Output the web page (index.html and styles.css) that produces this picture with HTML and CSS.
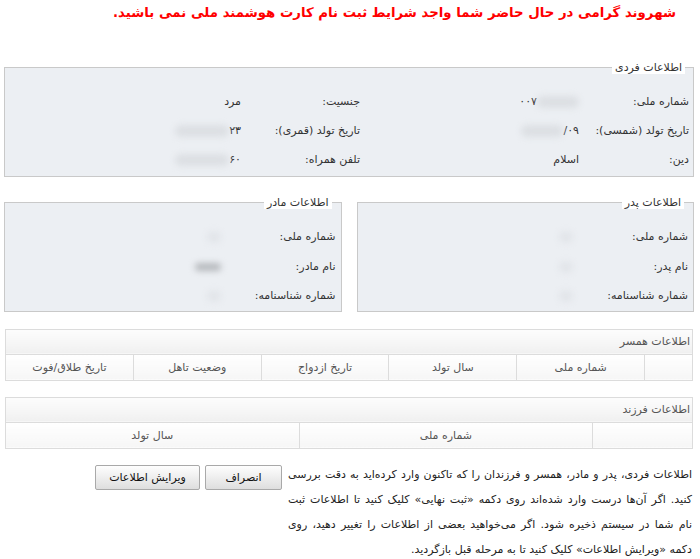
FILE: index.html
```html
<!DOCTYPE html>
<html lang="fa" dir="rtl">

<head>
    <meta charset="UTF-8">
    <meta name="viewport" content="width=device-width, initial-scale=1.0">
    <title>ثبت نام کارت هوشمند ملی</title>
    <link rel="stylesheet" href="styles.css">
</head>

<body>
    <div class="page">
        <h2 class="warning">شهروند گرامی در حال حاضر شما واجد شرایط ثبت نام کارت هوشمند ملی نمی باشید.</h2>

        <!-- اطلاعات فردی -->
        <fieldset class="box personal">
            <legend>اطلاعات فردی</legend>
            <table class="info">
                <tr>
                    <td class="c1">شماره ملی:</td>
                    <td class="c2"><span class="blur" style="width:42px"></span><span class="num">۰۰۷</span></td>
                    <td class="c3">جنسیت:</td>
                    <td>مرد</td>
                </tr>
                <tr>
                    <td class="c1">تاریخ تولد (شمسی):</td>
                    <td class="c2"><span class="num ltr">/۰۹</span><span class="blur" style="width:42px"></span></td>
                    <td class="c3">تاریخ تولد (قمری):</td>
                    <td><span class="num">۲۳</span><span class="blur" style="width:54px"></span></td>
                </tr>
                <tr>
                    <td class="c1">دین:</td>
                    <td class="c2">اسلام</td>
                    <td class="c3">تلفن همراه:</td>
                    <td><span class="num">۶۰</span><span class="blur" style="width:54px"></span></td>
                </tr>
            </table>
        </fieldset>

        <div class="parents">
            <fieldset class="box parent">
                <legend>اطلاعات پدر</legend>
                <table class="info">
                    <tr>
                        <td class="p1">شماره ملی:</td>
                        <td><span class="blur faint" style="width:14px"></span></td>
                    </tr>
                    <tr>
                        <td class="p1">نام پدر:</td>
                        <td><span class="blur faint" style="width:14px"></span></td>
                    </tr>
                    <tr>
                        <td class="p1">شماره شناسنامه:</td>
                        <td><span class="blur faint" style="width:14px"></span></td>
                    </tr>
                </table>
            </fieldset>
            <fieldset class="box parent">
                <legend>اطلاعات مادر</legend>
                <table class="info">
                    <tr>
                        <td class="p1">شماره ملی:</td>
                        <td><span class="blur faint" style="width:14px"></span></td>
                    </tr>
                    <tr>
                        <td class="p1">نام مادر:</td>
                        <td><span class="blur dark" style="width:26px"></span></td>
                    </tr>
                    <tr>
                        <td class="p1">شماره شناسنامه:</td>
                        <td><span class="blur faint" style="width:14px"></span></td>
                    </tr>
                </table>
            </fieldset>
        </div>

        <!-- اطلاعات همسر -->
        <table class="grid spouse">
            <tr>
                <th class="caption" colspan="6">اطلاعات همسر</th>
            </tr>
            <tr>
                <td class="first"></td>
                <td>شماره ملی</td>
                <td>سال تولد</td>
                <td>تاریخ ازدواج</td>
                <td>وضعیت تاهل</td>
                <td>تاریخ طلاق/فوت</td>
            </tr>
        </table>

        <!-- اطلاعات فرزند -->
        <table class="grid child">
            <tr>
                <th class="caption" colspan="3">اطلاعات فرزند</th>
            </tr>
            <tr>
                <td class="first"></td>
                <td>شماره ملی</td>
                <td>سال تولد</td>
            </tr>
        </table>

        <div class="footer">
            <p class="note">
                <span class="line">اطلاعات فردی، پدر و مادر، همسر و فرزندان را که تاکنون وارد کرده‌اید به دقت بررسی</span>
                <span class="line">کنید. اگر آن‌ها درست وارد شده‌اند روی دکمه «ثبت نهایی» کلیک کنید تا اطلاعات ثبت</span>
                <span class="line">نام شما در سیستم ذخیره شود. اگر می‌خواهید بعضی از اطلاعات را تغییر دهید، روی</span>
                <span class="line last">دکمه «ویرایش اطلاعات» کلیک کنید تا به مرحله قبل بازگردید.</span>
            </p>
            <div class="actions">
                <button class="btn cancel">انصراف</button>
                <button class="btn edit">ویرایش اطلاعات</button>
            </div>
        </div>
    </div>
</body>

</html>
```

FILE: styles.css
```css
body {
    margin: 0;
    font-family: "DejaVu Sans", "Noto Sans", sans-serif;
    font-size: 11px;
    color: #333;
    background: #fff;
}

.page {
    width: 690px;
    padding: 0 6px 0 4px;
}

.warning {
    margin: 0;
    padding: 5px 18px 0 0;
    height: 61px;
    box-sizing: border-box;
    color: #f00;
    font-size: 13.3px;
    font-weight: bold;
    text-align: right;
}

.box {
    margin: 0;
    border: 1px solid #c9c9c9;
    background: #eceff3;
}

.box legend {
    background: #fff;
    margin-right: 4px;
    padding: 0 3px;
    font-size: 11px;
    color: #333;
}

.personal {
    padding: 13px 4px 2px 4px;
}

.info {
    border-collapse: collapse;
    width: 100%;
}

.info td {
    height: 29px;
    padding: 0;
    text-align: right;
    vertical-align: middle;
    white-space: nowrap;
}

.personal .c1 {
    width: 110px;
}

.personal .c2 {
    width: 219px;
}

.personal .c3 {
    width: 119px;
}

.num {
    display: inline-block;
    vertical-align: middle;
}

.ltr {
    direction: ltr;
    unicode-bidi: isolate;
}

.blur {
    display: inline-block;
    height: 12px;
    vertical-align: middle;
    background: #dcdfe3;
    border-radius: 6px;
    filter: blur(3px);
}

.blur.faint {
    background: #e2e5e9;
}

.blur.dark {
    background: #b5b8bc;
    height: 8px;
}

.parents {
    display: flex;
    gap: 15px;
    margin-top: 19px;
}

.parent {
    flex: 1;
    padding: 13px 5px 0 5px;
}

.parent .info td {
    height: 29.5px;
}

.parent .p1 {
    width: 115px;
}

.grid {
    width: 688px;
    margin: 17px 1px 0 1px;
    border-collapse: collapse;
    border: 1px solid #d6d6d6;
    color: #555;
}

.grid th,
.grid td {
    border: 1px solid #dcdcdc;
    font-weight: normal;
    padding: 0;
}

.grid .caption {
    height: 24px;
    text-align: right;
    padding-right: 2px;
    background: linear-gradient(#fdfdfd, #f0f0f0);
}

.grid td {
    height: 25px;
    text-align: center;
    background: linear-gradient(#ffffff, #f6f6f6);
}

.spouse .first {
    width: 47px;
}

.spouse td {
    width: 127px;
}

.child {
    margin-top: 16px;
}

.child .first {
    width: 99px;
}

.child td {
    width: 293px;
}

.footer {
    display: flex;
    align-items: flex-start;
    margin-top: 13px;
}

.note {
    width: 404px;
    margin: 0;
    padding-right: 2px;
    font-size: 11px;
    line-height: 25px;
    color: #222;
}

.note .line {
    display: block;
    white-space: nowrap;
    text-align: justify;
    text-align-last: justify;
}

.note .line.last {
    text-align-last: right;
}

.actions {
    display: flex;
    gap: 5px;
    margin-top: 3px;
    margin-right: 6px;
}

.btn {
    height: 25px;
    padding: 0;
    border: 1px solid #a9a9a9;
    border-radius: 2px;
    background: linear-gradient(#fefefe, #dedede);
    font-family: "DejaVu Sans", sans-serif;
    font-size: 11px;
    color: #111;
}

.cancel {
    width: 77px;
}

.edit {
    width: 105px;
}
```
